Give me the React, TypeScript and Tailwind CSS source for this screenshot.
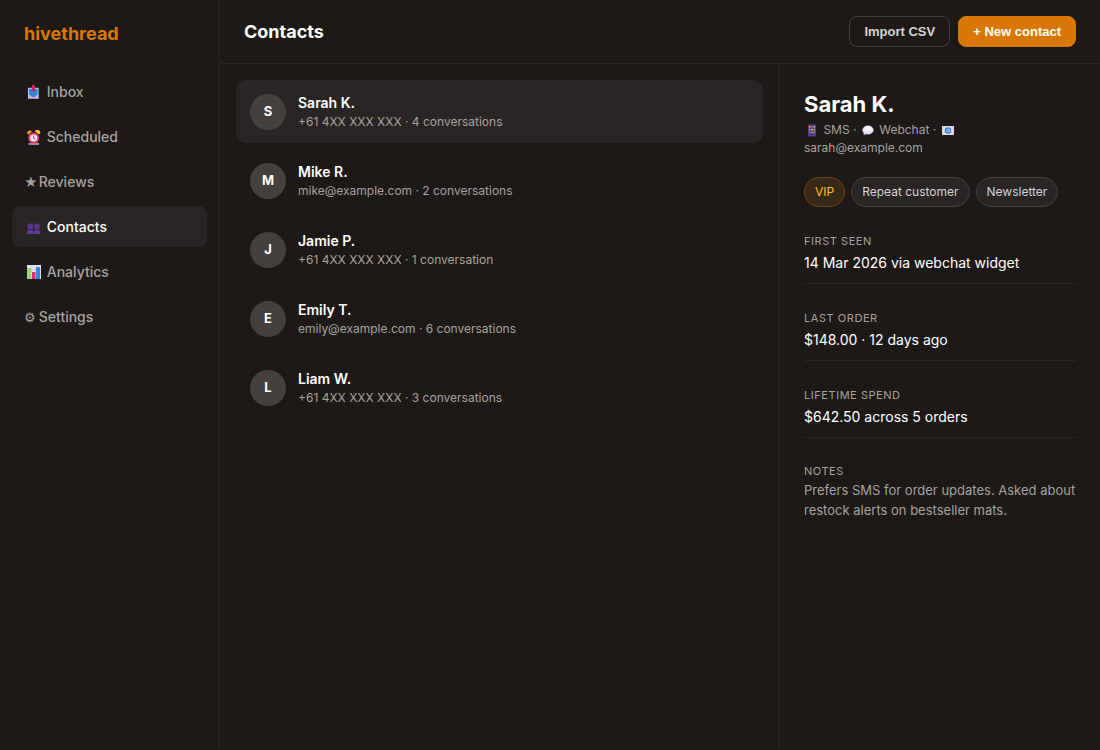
import React from 'react';

const InboxIcon = () => (
  <svg viewBox="0 0 19 15" className="inline-block w-[19px] h-[15px] align-[-3px]" aria-hidden="true">
    <path d="M4 3.500q0-.8.8-.8h9q.8 0 .8.8V11H4z" fill="#b9d4ef" />
    <path d="M5 3.800h8.600v6.500l-2 1.500H7L5 10z" fill="#2f86d8" />
    <path d="M4 10.300h2.700l1 1.500h3.400l1-1.500h2.500V14H4z" fill="#cdbfe0" />
    <path d="M4 13h10.600v1H4z" fill="#a48cc4" />
    <path d="M8 0h2.800v4.500h1L9.400 7 7 4.500h1z" fill="#cf2360" />
  </svg>
);

const ClockIcon = () => (
  <svg viewBox="0 0 19 15" className="inline-block w-[19px] h-[15px] align-[-3px]" aria-hidden="true">
    <path d="M3.500 4A2.600 2.600 0 0 1 8 1.500L4.500 4.500z" fill="#f59f28" />
    <path d="M11 1.500A2.600 2.600 0 0 1 16 3.500L14.800 4.500z" fill="#fbc93a" />
    <path d="M4.500 13.200h10.500v1.500H4.500z" fill="#cdb7e2" />
    <circle cx="9.700" cy="8" r="5.500" fill="#ed3567" />
    <circle cx="9.700" cy="8" r="3.600" fill="#f3e9f8" />
    <path d="M9.700 5.500V8l1.300 1.600" fill="none" stroke="#5a3d7c" strokeWidth="1" />
  </svg>
);

const PeopleIcon = () => (
  <svg viewBox="0 0 19 15" className="inline-block w-[19px] h-[15px] align-[-3px]" aria-hidden="true">
    <rect x="3.500" y="3.500" width="5.600" height="6.500" rx="2" fill="#54358b" />
    <rect x="10" y="3.500" width="5.600" height="6.500" rx="2" fill="#54358b" />
    <path d="M5 9h2.500v2H5zM11.500 9H14v2h-2.500z" fill="#3f2670" />
    <path d="M3 14v-2.300q0-1.200 1.300-1.200h4q1 0 1 1V14zM9.800 14v-2.500q0-1 1-1h4q1.200 0 1.200 1.200V14z" fill="#5d3b98" />
  </svg>
);

const ChartIcon = () => (
  <svg viewBox="0 0 19 15" className="inline-block w-[19px] h-[15px] align-[-3px]" aria-hidden="true">
    <path d="M3 0h14v14H3z" fill="#e4dcef" />
    <path d="M3 4.500h14M3 9h14M7.500 0v14M12 0v14" stroke="#cbbfdc" strokeWidth=".6" />
    <path d="M3 3h4v11H3z" fill="#94dc72" />
    <path d="M8 7h3.500v7H8z" fill="#dd2e70" />
    <path d="M12 2h4v12h-4z" fill="#2f8be0" />
  </svg>
);

const PhoneIcon = () => (
  <svg viewBox="0 0 16 13" className="inline-block w-4 h-[13px] align-[-3px]" aria-hidden="true">
    <rect x="4" y="0.500" width="8" height="12" rx=".8" fill="#553a91" />
    <path d="M5 2h6v7.500H5z" fill="#38295e" />
    <path d="M5 2h1.700v1.700H5zM9.300 4.800H11v1.700H9.300zM7.200 7.500h1.600v1.700H7.200z" fill="#f39a3b" />
    <path d="M7.200 2h1.600v1.700H7.200zM5 7.500h1.700v1.700H5z" fill="#e35555" />
    <path d="M9.300 2H11v1.700H9.300zM5 4.800h1.700v1.700H5zM9.300 7.500H11v1.700H9.300z" fill="#5cb6ea" />
    <path d="M7.200 4.800h1.600v1.700H7.200z" fill="#f5d35b" />
  </svg>
);

const BubbleIcon = () => (
  <svg viewBox="0 0 16 13" className="inline-block w-4 h-[13px] align-[-3px]" aria-hidden="true">
    <path d="M3.500 8L3.800 11.200 7.500 9.500z" fill="#c9b8dd" />
    <ellipse cx="8" cy="6" rx="5.600" ry="4.400" fill="#e6dcf0" />
    <ellipse cx="8" cy="5" rx="4.200" ry="2.800" fill="#f5eff9" />
  </svg>
);

const MailIcon = () => (
  <svg viewBox="0 0 16 13" className="inline-block w-4 h-[13px] align-[-3px]" aria-hidden="true">
    <rect x="2" y="2" width="12" height="9" fill="#e3d8ef" />
    <path d="M2 2l6 5 6-5M2 11l4-4M14 11l-4-4" fill="none" stroke="#c3b1da" strokeWidth=".6" />
    <circle cx="8" cy="6.500" r="3.200" fill="#3c86dc" />
    <circle cx="8" cy="6.500" r="1.300" fill="none" stroke="#d5e4f7" strokeWidth=".7" />
    <path d="M9.300 5.300v1.500q.6.900 1.200 0" fill="none" stroke="#d5e4f7" strokeWidth=".6" />
  </svg>
);

const navItems = [
  { label: 'Inbox', icon: <InboxIcon /> },
  { label: 'Scheduled', icon: <ClockIcon /> },
  { label: 'Reviews', icon: <span className="inline-block w-[11px] text-[13px] font-normal">★</span> },
  { label: 'Contacts', icon: <PeopleIcon />, active: true },
  { label: 'Analytics', icon: <ChartIcon /> },
  { label: 'Settings', icon: <span className="inline-block w-[11px] text-[13px] font-normal">⚙</span> },
];

const contacts = [
  { name: 'Sarah K.', meta: '+61 4XX XXX XXX · 4 conversations', active: true },
  { name: 'Mike R.', meta: 'mike@example.com · 2 conversations' },
  { name: 'Jamie P.', meta: '+61 4XX XXX XXX · 1 conversation' },
  { name: 'Emily T.', meta: 'emily@example.com · 6 conversations' },
  { name: 'Liam W.', meta: '+61 4XX XXX XXX · 3 conversations' },
];

const facts = [
  { label: 'First seen', value: '14 Mar 2026 via webchat widget' },
  { label: 'Last order', value: '$148.00 · 12 days ago' },
  { label: 'Lifetime spend', value: '$642.50 across 5 orders' },
];

const Sidebar: React.FC = () => (
  <aside className="w-[220px] shrink-0 border-r border-[#292524] px-3 py-5">
    <div className="px-3 text-lg leading-[27px] font-bold text-[#d97706]">hivethread</div>
    <nav className="mt-6 flex flex-col gap-1">
      {navItems.map((item) => (
        <a
          key={item.label}
          href="#"
          className={`block h-[41px] rounded-lg px-3 py-2.5 text-sm leading-[21px] font-medium ${
            item.active ? 'bg-[#292524] text-white' : 'text-[#a8a29e]'
          }`}
        >
          {item.icon} {item.label}
        </a>
      ))}
    </nav>
  </aside>
);

const ContactList: React.FC = () => (
  <section className="flex-1 min-w-0 p-4 flex flex-col gap-1.5">
    {contacts.map((c) => (
      <button
        key={c.name}
        className={`flex items-center gap-3 rounded-[10px] px-3.5 py-3 text-left ${c.active ? 'bg-[#292524]' : ''}`}
      >
        <span className="flex size-9 shrink-0 items-center justify-center rounded-full bg-[#44403c] text-[13px] font-bold text-white">
          {c.name[0]}
        </span>
        <span className="flex flex-col">
          <span className="text-sm leading-[21px] font-semibold text-white">{c.name}</span>
          <span className="text-xs leading-[18px] text-[#a8a29e]">{c.meta}</span>
        </span>
      </button>
    ))}
  </section>
);

const Details: React.FC = () => (
  <aside className="w-[321px] shrink-0 border-l border-[#292524] p-6">
    <h2 className="text-[22px] leading-[33px] font-bold text-white">Sarah K.</h2>
    <p className="text-xs leading-[18px] text-[#a8a29e]">
      <PhoneIcon /> SMS · <BubbleIcon /> Webchat · <MailIcon />
      <br />
      sarah@example.com
    </p>
    <div className="mt-5 flex flex-wrap gap-1.5 text-xs leading-5">
      <span className="rounded-full border border-[#6f4411] bg-[#3a2817] px-2.5 py-1 text-[#fbbf24]">VIP</span>
      <span className="rounded-full border border-[#44403c] bg-[#292524] px-2.5 py-1 text-[#d6d3d1]">Repeat customer</span>
      <span className="rounded-full border border-[#44403c] bg-[#292524] px-2.5 py-1 text-[#d6d3d1]">Newsletter</span>
    </div>
    <dl className="mt-6">
      {facts.map((f) => (
        <div key={f.label} className="mb-6 border-b border-[#292524] pb-2">
          <dt className="text-[11px] leading-5 tracking-wider uppercase text-[#a8a29e]">{f.label}</dt>
          <dd className="text-sm leading-6 text-white">{f.value}</dd>
        </div>
      ))}
      <div>
        <dt className="text-[11px] leading-[18px] tracking-wider uppercase text-[#a8a29e]">Notes</dt>
        <dd className="text-[13px] leading-5 text-[#a8a29e]">
          Prefers SMS for order updates. Asked about restock alerts on bestseller mats.
        </dd>
      </div>
    </dl>
  </aside>
);

export default function App() {
  return (
    <div className="flex min-h-screen bg-[#1c1917] font-['Inter',sans-serif]">
      <Sidebar />
      <main className="flex flex-1 min-w-0 flex-col">
        <header className="flex items-center justify-between border-b border-[#292524] px-6 py-4">
          <h1 className="text-lg leading-7 font-bold text-white">Contacts</h1>
          <div className="flex gap-2 font-['Liberation_Sans',sans-serif] text-[13px] leading-[15px] font-bold">
            <button className="rounded-lg border border-[#44403c] px-3.5 py-[7px] text-[#d6d3d1]">Import CSV</button>
            <button className="rounded-lg border border-[#d97706] bg-[#d97706] px-3.5 py-[7px] text-white">+ New contact</button>
          </div>
        </header>
        <div className="flex flex-1">
          <ContactList />
          <Details />
        </div>
      </main>
    </div>
  );
}
